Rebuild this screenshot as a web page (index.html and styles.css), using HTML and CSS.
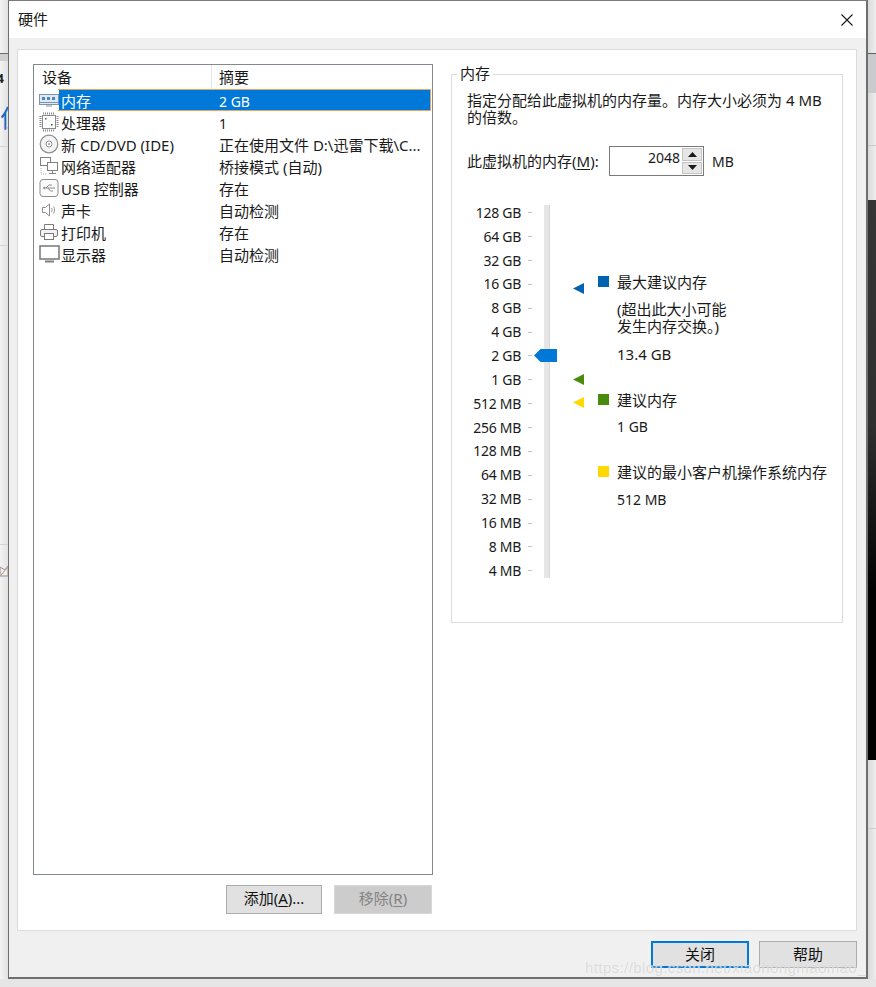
FILE: index.html
```html
<!DOCTYPE html>
<html lang="zh-CN">
<head>
<meta charset="utf-8">
<title>硬件</title>
<link rel="stylesheet" href="styles.css">
</head>
<body>
<div class="desktop">
  <div class="side side-left">
    <div class="sl-top"></div>
    <div class="sl-band"></div>
    <div class="sl-a"><span class="sl-four">4</span><span class="sl-blue">位</span></div>
    <div class="sl-b"></div>
    <div class="sl-c"><svg class="sl-icon" width="8" height="12" viewBox="0 0 8 12"><path d="M0 2l5 3 3-4v10H0z" fill="#f4efe6" stroke="#8a8fb0"/><path d="M1 10l6-7" stroke="#c98b5a"/></svg></div>
  </div>
  <main class="dialog">
    <header class="titlebar">
      <span class="title">硬件</span>
      <svg class="close" width="12" height="12" viewBox="0 0 12 12"><path d="M.5.5l11 11M11.5.5l-11 11" stroke="#1a1a1a" stroke-width="1.1" fill="none"/></svg>
    </header>
    <div class="body">
      <section class="panel">
        <div class="col-left">
          <div class="list">
            <div class="list-head"><span class="h-dev">设备</span><span class="h-sum">摘要</span></div>
            <div class="row selected">
              <svg class="ico" width="20" height="14" viewBox="0 0 20 14"><rect x=".5" y="1.5" width="19" height="10" fill="#dfe9f3" stroke="#7d94aa"/><path d="M3 4h3v3H3zM8 4h3v3H8zM13 4h3v3h-3z" fill="#4e86b8"/><path d="M1 9.5h18M7 13h6" stroke="#7d94aa"/></svg>
              <span class="name"><span class="name-sel">内存</span></span><span class="sum sum-small">2 GB</span>
            </div>
            <div class="row">
              <svg class="ico" width="20" height="20" viewBox="0 0 20 20"><rect x="3.5" y="3.5" width="13" height="13" fill="#fff" stroke="#8a8a8a"/><path d="M4 1.500h12M4 18.500h12M1.500 4v12M18.500 4v12" stroke="#8a8a8a" stroke-width="2" stroke-dasharray="1 1" fill="none"/><rect x="6" y="6" width="1.5" height="1.5" fill="#555"/><rect x="12" y="12" width="1.6" height="1.6" fill="#555"/></svg>
              <span class="name">处理器</span><span class="sum sum-small">1</span>
            </div>
            <div class="row">
              <svg class="ico" width="20" height="20" viewBox="0 0 20 20"><circle cx="10" cy="10" r="8.8" fill="#f4f4f4" stroke="#8f8f8f" stroke-width="1.2"/><circle cx="10" cy="10" r="3" fill="#fff" stroke="#8f8f8f"/><circle cx="10" cy="10" r=".9" fill="#8f8f8f"/></svg>
              <span class="name">新 CD/DVD (IDE)</span><span class="sum">正在使用文件 D:\迅雷下载\C...</span>
            </div>
            <div class="row">
              <svg class="ico" width="20" height="20" viewBox="0 0 20 20"><rect x="1.500" y="1.500" width="10" height="8" fill="#fff" stroke="#808080"/><rect x="8.500" y="6.500" width="10" height="8" fill="#fff" stroke="#808080"/><path d="M13.500 15v2M10 17.500h7" stroke="#808080"/><path d="M2 12v6h5" stroke="#b0b0b0" stroke-dasharray="1 1" fill="none"/></svg>
              <span class="name">网络适配器</span><span class="sum">桥接模式 (自动)</span>
            </div>
            <div class="row">
              <svg class="ico" width="20" height="20" viewBox="0 0 20 20"><rect x="1" y="1.500" width="18" height="17" rx="3" fill="#fbfbfb" stroke="#8c8c8c"/><path d="M4 10h12M7 10l3-3h3M9 10l2.500 3H14" stroke="#8c8c8c" fill="none"/><path d="M4 10l2-1.500v3z" fill="#8c8c8c"/></svg>
              <span class="name">USB 控制器</span><span class="sum">存在</span>
            </div>
            <div class="row">
              <svg class="ico" width="20" height="20" viewBox="0 0 20 20"><path d="M3.500 7.500h3l4-3.500v12l-4-3.500h-3z" fill="#fff" stroke="#8c8c8c"/><path d="M12.500 8c.8 1.300.8 2.700 0 4M14.500 6.500c1.400 2.200 1.400 4.800 0 7" stroke="#9a9a9a" fill="none"/></svg>
              <span class="name">声卡</span><span class="sum">自动检测</span>
            </div>
            <div class="row">
              <svg class="ico" width="20" height="20" viewBox="0 0 20 20"><path d="M5.500 7V2.500h9V7" fill="#fff" stroke="#7a7a7a"/><rect x="1.500" y="7.500" width="17" height="7" rx="1.500" fill="#f2f2f2" stroke="#7a7a7a"/><rect x="5.500" y="11.500" width="9" height="6" fill="#fff" stroke="#7a7a7a"/></svg>
              <span class="name">打印机</span><span class="sum">存在</span>
            </div>
            <div class="row">
              <svg class="ico ico-wide" width="21" height="18" viewBox="0 0 21 18"><rect x="1" y="1" width="19" height="13" fill="#fff" stroke="#7f7f7f" stroke-width="1.600"/><path d="M6 16.500h9" stroke="#7f7f7f" stroke-width="2"/></svg>
              <span class="name">显示器</span><span class="sum">自动检测</span>
            </div>
          </div>
          <div class="list-actions">
            <button class="btn btn-add" type="button">添加(<u>A</u>)...</button>
            <button class="btn btn-off" type="button">移除(<u>R</u>)</button>
          </div>
        </div>
        <fieldset class="group">
          <legend class="legend">内存</legend>
          <p class="intro">指定分配给此虚拟机的内存量。内存大小必须为 4 MB<br>的倍数。</p>
          <div class="amount">
            <span class="amount-label">此虚拟机的内存(<u>M</u>):</span>
            <div class="spin">
              <span class="spin-value">2048</span>
              <div class="spin-btns">
                <span class="spin-btn"><svg width="9" height="5" viewBox="0 0 9 5"><path d="M4.500 0L9 5H0z" fill="#1a1a1a"/></svg></span>
                <span class="spin-btn"><svg width="9" height="5" viewBox="0 0 9 5"><path d="M0 0h9L4.500 5z" fill="#1a1a1a"/></svg></span>
              </div>
            </div>
            <span class="unit">MB</span>
          </div>
          <div class="slider">
            <div class="scale">
              <div class="tick">128 GB</div><div class="tick">64 GB</div><div class="tick">32 GB</div><div class="tick">16 GB</div>
              <div class="tick">8 GB</div><div class="tick">4 GB</div><div class="tick">2 GB</div><div class="tick">1 GB</div>
              <div class="tick">512 MB</div><div class="tick">256 MB</div><div class="tick">128 MB</div><div class="tick">64 MB</div>
              <div class="tick">32 MB</div><div class="tick">16 MB</div><div class="tick">8 MB</div><div class="tick">4 MB</div>
            </div>
            <div class="track"></div>
            <svg class="thumb" width="23" height="13" viewBox="0 0 23 13"><path d="M0 6.500L6.500 0H23v13H6.500z" fill="#0078d7"/></svg>
            <svg class="arrow arrow-max" width="11" height="11" viewBox="0 0 11 11"><path d="M0 5.500L11 0v11z" fill="#0063b1"/></svg>
            <svg class="arrow arrow-rec" width="11" height="11" viewBox="0 0 11 11"><path d="M0 5.500L11 0v11z" fill="#498b0c"/></svg>
            <svg class="arrow arrow-min" width="11" height="11" viewBox="0 0 11 11"><path d="M0 5.500L11 0v11z" fill="#ffd800"/></svg>
            <div class="legend-col">
              <div class="key key-max"><i class="swatch s-blue"></i><span>最大建议内存</span></div>
              <p class="note">(超出此大小可能<br>发生内存交换。)</p>
              <p class="val val-max">13.4 GB</p>
              <div class="key key-rec"><i class="swatch s-green"></i><span>建议内存</span></div>
              <p class="val val-rec">1 GB</p>
              <div class="key key-min"><i class="swatch s-yellow"></i><span>建议的最小客户机操作系统内存</span></div>
              <p class="val val-min">512 MB</p>
            </div>
          </div>
        </fieldset>
      </section>
      <footer class="footer">
        <button class="btn btn-primary" type="button">关闭</button>
        <button class="btn btn-help" type="button">帮助</button>
      </footer>
    </div>
    <div class="watermark">https://blog.csdn.net/xiaohongmaomao_</div>
  </main>
  <div class="side side-right">
    <div class="sr-top"></div>
    <div class="sr-band"></div>
    <div class="sr-a"></div>
    <div class="sr-b"></div>
    <div class="sr-dark"></div>
    <div class="sr-c"></div>
    <div class="sr-d"></div>
  </div>
  <div class="under"></div>
</div>
</body>
</html>
```

FILE: styles.css
```css
* { box-sizing: border-box; }
html, body { margin: 0; padding: 0; }
body {
  width: 876px;
  height: 987px;
  overflow: hidden;
  background: #eeeeee;
  color: #1a1a1a;
  font: 15px/17px "Noto Sans", "Noto Sans CJK SC", sans-serif;
}
p { margin: 0; }
u { text-underline-offset: 2px; }

.desktop {
  display: grid;
  grid-template-columns: 8px 860px 8px;
  grid-template-rows: 979px 8px;
  width: 876px;
  height: 987px;
}

/* what shows around the dialog */
.side { display: flex; flex-direction: column; overflow: hidden; }
.side-left { background: linear-gradient(90deg, #f3f3f3, #e2e2e2); }
.sl-top { height: 54px; border-bottom: 1px solid #6d6d6d; }
.sl-band { height: 7px; background: #cfcfcf; }
.sl-a { position: relative; height: 86px; border-bottom: 1px solid #d4d4d4; overflow: hidden; }
.sl-four { position: absolute; left: -3px; top: 9px; font-size: 12px; font-weight: 700; color: #222; }
.sl-blue { position: absolute; left: 0; top: 43px; font-size: 24px; line-height: 28px; color: #1569c7; white-space: nowrap; }
.sl-b { height: 99px; border-bottom: 1px solid #d4d4d4; }
.sl-c { height: 299px; border-bottom: 1px solid #d4d4d4; }
.sl-icon { display: block; margin-top: 319px; }
.side-right { background: linear-gradient(90deg, #dadada, #eeeeee); }
.sr-top { height: 54px; border-bottom: 1px solid #5f6265; }
.sr-band { height: 39px; background: #c9cbce; }
.sr-a { height: 53px; border-bottom: 1px solid #c8c8c8; }
.sr-b { height: 54px; }
.sr-dark { height: 560px; background: linear-gradient(180deg, #353535, #2f2f2f 40%, #000 70%, #000); }
.sr-c { height: 69px; border-bottom: 1px solid #cfcfcf; }
.sr-d { flex: 1; }
.under { grid-column: 1 / -1; background: #e6e6e6; }

/* dialog */
.dialog {
  position: relative;
  display: flex;
  flex-direction: column;
  border-style: solid;
  border-width: 1px 2px 2px 1px;
  border-color: #7a7a7a #6f6f6f #6f6f6f #6f6f6f;
  background: #f0f0f0;
}
.titlebar {
  display: flex;
  align-items: center;
  justify-content: space-between;
  height: 37px;
  padding: 0 9px 0 9px;
  background: #fff;
}
.close { margin-right: 4px; }

.body { flex: 1; display: flex; flex-direction: column; padding: 11px 9px 0 8px; }
.panel {
  display: flex;
  gap: 18px;
  height: 882px;
  padding: 14px 12px 0 15px;
  background: #fff;
  border: 1px solid #dcdcdc;
}

/* device list */
.col-left { width: 400px; flex: none; }
.list { height: 811px; border: 1px solid #828790; background: #fff; }
.list-head { display: flex; height: 24px; align-items: center; }
.h-dev { width: 178px; padding-left: 8px; border-right: 1px solid #e5e5e5; line-height: 24px; }
.h-sum { padding-left: 7px; }
.row { display: flex; align-items: center; height: 22px; position: relative; }
.ico { flex: none; width: 20px; margin-left: 5px; }
.ico-wide { width: 21px; margin-right: -1px; }
.name { flex: none; width: 157px; padding: 2px 0 0 2px; white-space: nowrap; }
.sum { padding: 2px 0 0 3px; white-space: nowrap; }
.sum-small { font-size: 14px; }
.selected {
  margin-right: 1px;
  color: #fff;
  background: linear-gradient(90deg, #fff 25px, #0078d7 25px);
  border-top: 1px dotted #e9a35e;
  border-bottom: 1px dotted #e9a35e;
  border-right: 1px dotted #e9a35e;
  border-image: linear-gradient(90deg, #fff 25px, #e9a35e 25px) 1;
}
.name-sel { color: #fff; }

.list-actions { display: flex; justify-content: flex-end; gap: 12px; margin-top: 10px; padding-right: 1px; }
.btn {
  width: 97px;
  height: 29px;
  padding: 0 0 2px;
  font: inherit;
  color: #111;
  background: #e1e1e1;
  border: 1px solid #adadad;
  border-radius: 0;
}
.btn-add { width: 96px; }
.btn-off { width: 98px; background: #cccccc; border-color: #d8d8d8; color: #838383; }

/* memory group */
.group {
  flex: none;
  width: 392px;
  height: 559px;
  min-width: 0;
  margin: 0;
  padding: 0 0 0 15px;
  border: 1px solid #dcdcdc;
}
.legend { margin-left: -10px; padding: 0 3px; height: 20px; line-height: 18px; }
.intro { margin-top: 8px; }
.amount { display: flex; align-items: center; margin-top: 20px; height: 30px; }
.amount-label { width: 142px; flex: none; }
.spin {
  display: flex;
  justify-content: space-between;
  width: 95px;
  height: 30px;
  border: 1px solid #7a7a7a;
  background: #fff;
  padding: 1px;
}
.spin-value { flex: 1; text-align: right; font-size: 14px; line-height: 20px; padding-right: 2px; }
.spin-btns { width: 20px; display: flex; flex-direction: column; gap: 1px; }
.spin-btn { flex: 1; display: flex; align-items: center; justify-content: center; background: #e6e6e6; border: 1px solid #c4c4c4; }
.unit { margin-left: 8px; font-size: 14px; }

.slider { position: relative; display: flex; margin-top: 25px; }
.scale { width: 68px; flex: none; display: grid; grid-auto-rows: 23.87px; margin-top: -.6px; }
.tick {
  position: relative;
  display: flex;
  align-items: center;
  justify-content: flex-end;
  padding-right: 14px;
  font-size: 14px;
  letter-spacing: -.3px;
  white-space: nowrap;
}
.tick::after {
  content: "";
  position: absolute;
  right: 3px;
  top: 50%;
  width: 4px;
  height: 1px;
  background: #c4c4c4;
}
.track { flex: none; width: 6px; height: 373px; margin: 4px 0 0 9px; background: #e6e6e6; border-right: 1px solid #d8d8d8; }
.thumb { position: absolute; left: 67px; top: 148px; }
.arrow { position: absolute; left: 106px; }
.arrow-max { top: 82px; }
.arrow-rec { top: 173px; }
.arrow-min { top: 196px; }
.legend-col { margin-left: 48px; padding-top: 73px; }
.key { display: flex; align-items: center; gap: 8px; white-space: nowrap; height: 17px; }
.swatch { display: block; flex: none; width: 11px; height: 11px; margin-top: -2px; }
.s-blue { background: #0063b1; }
.s-green { background: #498b0c; }
.s-yellow { background: #ffd800; }
.note, .val { margin-left: 19px; white-space: nowrap; }
.note { margin-top: 10px; }
.val { font-size: 14px; }
.val-max { margin-top: 11px; font-size: 15px; }
.key-rec { margin-top: 29px; }
.val-rec { margin-top: 9px; }
.key-min { margin-top: 29px; }
.val-min { margin-top: 10px; }

/* footer */
.footer { display: flex; justify-content: flex-end; gap: 10px; padding: 10px 0 0 0; }
.btn-primary { width: 98px; height: 27px; border: 2px solid #0078d7; padding: 0; }
.btn-help { width: 98px; height: 27px; padding: 0; }

.watermark {
  position: absolute;
  left: 576px;
  top: 957px;
  font: 15px/20px "Liberation Sans", sans-serif;
  letter-spacing: .4px;
  color: rgba(190, 190, 190, .55);
  text-shadow: 0 0 1px rgba(255, 255, 255, .9);
  white-space: nowrap;
}
```
